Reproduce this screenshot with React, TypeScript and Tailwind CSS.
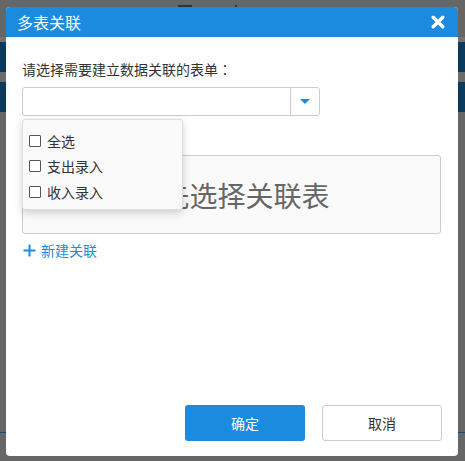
import React from "react";

const font = { fontFamily: '"Noto Sans CJK SC", "Liberation Sans", sans-serif' };

function Check({ label }: { label: string }) {
  return (
    <div className="flex h-[25.5px] items-center">
      <span className="ml-[6px] box-border h-[12px] w-[12px] rounded-[1px] border border-[#555] bg-white" />
      <span className="ml-[6px] text-[14px] leading-[20px] text-[#333]">{label}</span>
    </div>
  );
}

export default function App() {
  return (
    <div className="relative h-[461px] w-[465px] overflow-hidden bg-[#666]" style={font}>
      {/* background page behind overlay */}
      <div className="flex flex-col">
        <div className="relative h-[37px] bg-[#666]">
          <div className="absolute left-[178px] top-[5px] h-[2px] w-[14px] bg-[#333]" />
          <div className="absolute left-[235px] top-[5px] h-[2px] w-[2px] bg-[#333]" />
        </div>
        <div className="h-[5px] bg-[#727272]" />
        <div className="h-[30px] bg-[#0b3a5c]" />
        <div className="h-[10px] bg-[#6c6c6c]" />
        <div className="h-[30px] bg-[#0b3a5c]" />
        <div className="h-[320px] bg-[#666]" />
        <div className="h-[1px] bg-[#1d4a6c]" />
      </div>

      {/* modal */}
      <div className="absolute left-[6px] top-[7px] flex h-[449px] w-[452px] flex-col rounded-[4px] bg-white">
        <div className="flex h-[30px] items-center justify-between rounded-t-[4px] bg-[#1a8bdf] pl-[11px] pr-[13px]">
          <span className="text-[16px] leading-[20px] text-white">多表关联</span>
          <svg width="14" height="14" viewBox="0 0 14 14">
            <path d="M2.2 2.2 L11.8 11.8 M11.8 2.2 L2.2 11.8" stroke="white" strokeWidth="3.4" strokeLinecap="round" />
          </svg>
        </div>

        <div className="relative flex flex-1 flex-col pl-[16px] pr-[17px] pt-[22px]">
          <div className="text-[14px] leading-[20px] text-[#333]">
            请选择需要建立数据关联的表单
            <span className="font-['Noto_Sans_CJK_TC',sans-serif]">：</span>
          </div>
          <div className="mt-[8px] flex h-[29px] w-[298px] rounded-[3px] border border-[#ccc] bg-white">
            <div className="flex-1" />
            <div className="flex w-[29px] items-center justify-center border-l border-[#ccc]">
              <svg width="10" height="5" viewBox="0 0 10 5">
                <path d="M0 0 L10 0 L5 5 Z" fill="#1a8bdf" />
              </svg>
            </div>
          </div>

          <div className="mt-[39px] flex h-[79px] items-center justify-center rounded-[3px] border border-[#ccc] bg-[#fafafa]">
            <span className="text-[28px] leading-[32px] text-[#666]">请先选择关联表</span>
          </div>

          <div className="mt-[6px] flex h-[20px] items-center text-[#1a8bdf]">
            <svg width="13" height="13" viewBox="0 0 13 13" className="ml-[1px]">
              <path d="M6.5 0.5 V12.5 M0.5 6.5 H12.5" stroke="#1a8bdf" strokeWidth="2" />
            </svg>
            <span className="ml-[5px] text-[14px] leading-[20px]">新建关联</span>
          </div>

          {/* dropdown list */}
          <div className="absolute left-[16px] top-[82px] box-border flex h-[91px] w-[161px] flex-col rounded-[3px] border border-[#ddd] bg-[#fafafa] pt-[8px] shadow-[0_3px_8px_rgba(0,0,0,0.18)]">
            <Check label="全选" />
            <Check label="支出录入" />
            <Check label="收入录入" />
          </div>
        </div>

        <div className="flex justify-end gap-[17px] pb-[15px] pr-[16px]">
          <button className="h-[36px] w-[120px] rounded-[3px] bg-[#1a8bdf] text-[14px] text-white">确定</button>
          <button className="box-border h-[36px] w-[120px] rounded-[3px] border border-[#ccc] bg-white text-[14px] text-[#333]">取消</button>
        </div>
      </div>
    </div>
  );
}
